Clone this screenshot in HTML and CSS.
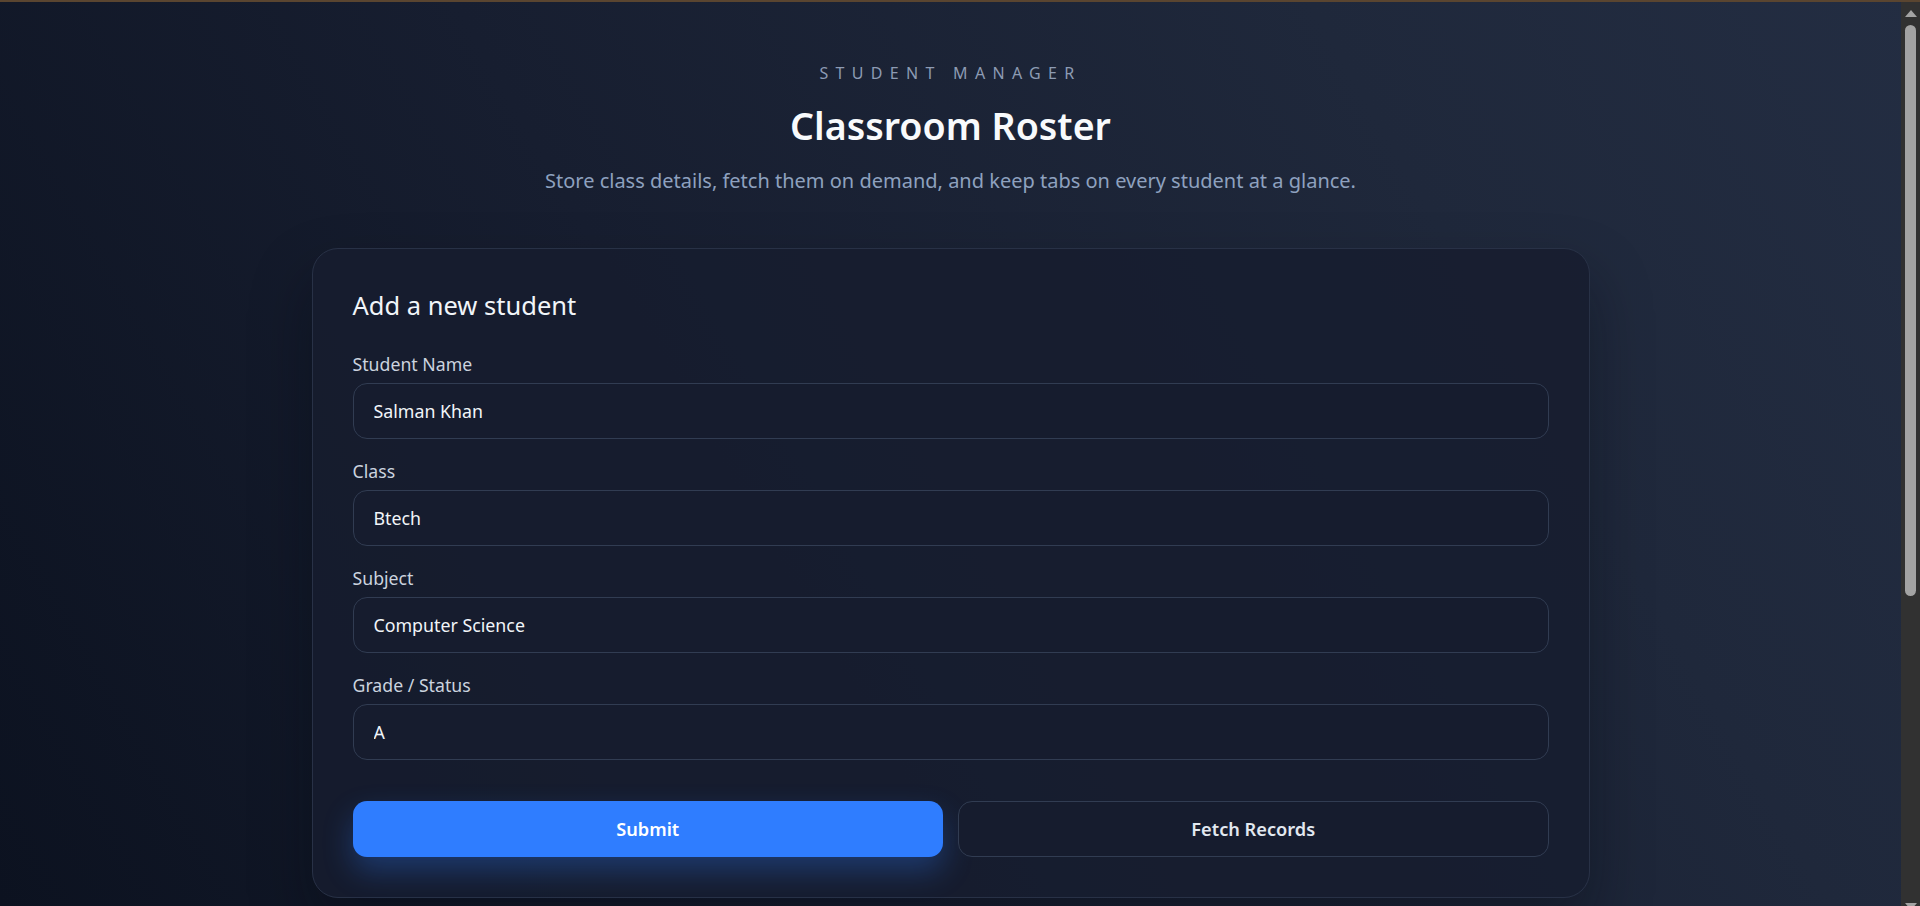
FILE: index.html
```html
<!DOCTYPE html>
<html lang="en">
<head>
<meta charset="utf-8">
<title>Classroom Roster</title>
<link rel="stylesheet" href="styles.css">
</head>
<body>
<main class="page">
  <header class="hero">
    <p class="eyebrow">Student Manager</p>
    <h1 class="title">Classroom Roster</h1>
    <p class="lead">Store class details, fetch them on demand, and keep tabs on every student at a glance.</p>
  </header>

  <section class="card">
    <h2 class="card-title">Add a new student</h2>
    <form class="form">
      <div class="fields">
        <label class="field">
          <span class="field-label">Student Name</span>
          <input class="input" type="text" value="Salman Khan">
        </label>
        <label class="field">
          <span class="field-label">Class</span>
          <input class="input" type="text" value="Btech">
        </label>
        <label class="field">
          <span class="field-label">Subject</span>
          <input class="input" type="text" value="Computer Science">
        </label>
        <label class="field">
          <span class="field-label">Grade / Status</span>
          <input class="input" type="text" value="A">
        </label>
      </div>
      <div class="actions">
        <button class="btn btn-primary" type="button">Submit</button>
        <button class="btn btn-ghost" type="button">Fetch Records</button>
      </div>
    </form>
  </section>
</main>

<div class="scrollbar" aria-hidden="true">
  <span class="sb-button"><span class="sb-arrow sb-arrow-up"></span></span>
  <span class="sb-thumb"></span>
  <span class="sb-button sb-button-end"><span class="sb-arrow sb-arrow-down"></span></span>
</div>
</body>
</html>
```

FILE: styles.css
```css
:root {
  color-scheme: dark;
}

* {
  box-sizing: border-box;
}

html {
  background: linear-gradient(60deg, #0c1220 0%, #171e30 40%, #1f283b 75%, #232d42 100%) fixed;
}

body {
  margin: 0;
  padding-right: 19px;
  border-top: 2px solid #5a4530;
  font-family: "Noto Sans", "Open Sans", sans-serif;
  color: #e2e8f0;
}

.page {
  max-width: 1278px;
  margin: 0 auto;
  padding: 59px 0 120px;
}

.hero {
  text-align: center;
}

.eyebrow {
  margin: 0;
  font-size: 16px;
  line-height: 24px;
  letter-spacing: 7.3px;
  text-transform: uppercase;
  color: #8d9bb3;
}

.title {
  margin: 17px 0 0;
  font-size: 37.6px;
  line-height: 48px;
  font-weight: 600;
  color: #f8fafc;
}

.lead {
  margin: 17px 0 0;
  font-size: 20px;
  line-height: 28px;
  color: #8ea1bf;
}

.card {
  margin-top: 53px;
  padding: 40px;
  border: 1px solid #283146;
  border-radius: 26px;
  background: rgba(23, 29, 46, 0.84);
  box-shadow: 0 30px 60px rgba(5, 8, 16, 0.35);
}

.card-title {
  margin: 0 0 31px;
  font-size: 25.5px;
  line-height: 32px;
  font-weight: 400;
  color: #f1f5f9;
}

.form {
  display: flex;
  flex-direction: column;
}

.fields {
  display: flex;
  flex-direction: column;
  gap: 20px;
}

.field {
  display: flex;
  flex-direction: column;
  gap: 7px;
}

.field-label {
  font-size: 17.7px;
  line-height: 24px;
  color: #cbd3df;
}

.input {
  height: 56px;
  padding: 0 20px;
  border: 1px solid #313c52;
  border-radius: 14px;
  background: #161c2e;
  font-family: inherit;
  font-size: 17.8px;
  color: #f1f5f9;
  outline: none;
}

.actions {
  margin-top: 41px;
  display: grid;
  grid-template-columns: 1fr 1fr;
  gap: 15px;
}

.btn {
  height: 56px;
  border-radius: 14px;
  font-family: inherit;
  font-size: 18.2px;
  font-weight: 600;
  cursor: pointer;
}

.btn-primary {
  border: none;
  background: #2f7dff;
  color: #ffffff;
  box-shadow: 0 14px 30px rgba(47, 125, 255, 0.3);
}

.btn-ghost {
  border: 1px solid #313c52;
  background: #161c2e;
  color: #e2e8f0;
}

/* Browser scrollbar (drawn over the page edge) */
.scrollbar {
  position: fixed;
  top: 2px;
  right: 0;
  bottom: -14px;
  width: 19px;
  display: flex;
  flex-direction: column;
  align-items: center;
  background: #313131;
}

.sb-button {
  flex: none;
  height: 20px;
  width: 100%;
  display: flex;
  justify-content: center;
  padding-top: 8px;
}

.sb-button-end {
  margin-top: auto;
  padding-top: 3px;
}

.sb-arrow {
  width: 0;
  height: 0;
  border-left: 6px solid transparent;
  border-right: 6px solid transparent;
}

.sb-arrow-up {
  border-bottom: 7px solid #a3a3a3;
}

.sb-arrow-down {
  border-top: 7px solid #a3a3a3;
}

.sb-thumb {
  flex: none;
  margin-top: 3px;
  width: 11px;
  height: 571px;
  border-radius: 6px;
  background: #a3a3a3;
}
```
